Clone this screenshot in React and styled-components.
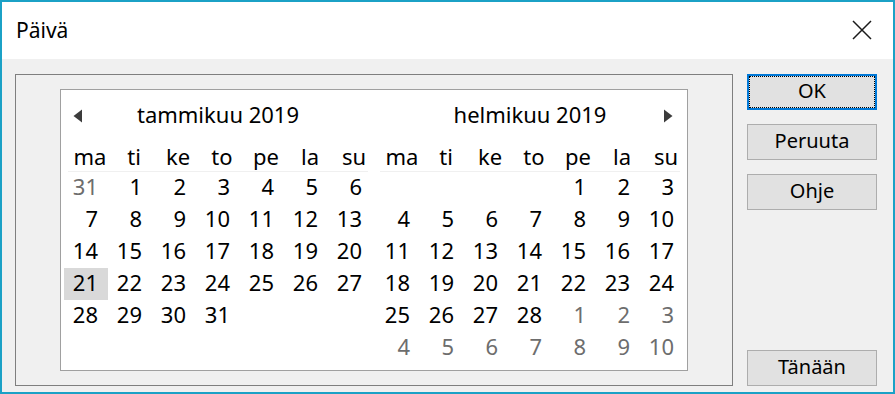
import React from "react";
import styled, { createGlobalStyle } from "styled-components";

const GlobalStyle = createGlobalStyle`
  html, body {
    margin: 0;
    padding: 0;
    background: #ffffff;
  }
  body {
    font-family: "Noto Sans", "Open Sans", sans-serif;
    color: #000000;
  }
`;

const JAN = {
  title: "tammikuu 2019",
  days: [
    [31, true], [1], [2], [3], [4], [5], [6],
    [7], [8], [9], [10], [11], [12], [13],
    [14], [15], [16], [17], [18], [19], [20],
    [21, false, true], [22], [23], [24], [25], [26], [27],
    [28], [29], [30], [31],
  ],
};

const FEB = {
  title: "helmikuu 2019",
  days: [
    [null], [null], [null], [null], [1], [2], [3],
    [4], [5], [6], [7], [8], [9], [10],
    [11], [12], [13], [14], [15], [16], [17],
    [18], [19], [20], [21], [22], [23], [24],
    [25], [26], [27], [28], [1, true], [2, true], [3, true],
    [4, true], [5, true], [6, true], [7, true], [8, true], [9, true], [10, true],
  ],
};

const WEEKDAYS = ["ma", "ti", "ke", "to", "pe", "la", "su"];

const Arrow = ({ dir }) => (
  <svg width="9" height="14" viewBox="0 0 9 14">
    {dir === "left" ? (
      <path d="M9 0.5 L9 13.5 L0.5 7 Z" fill="#3c3c3c" />
    ) : (
      <path d="M0 0.5 L0 13.5 L8.5 7 Z" fill="#3c3c3c" />
    )}
  </svg>
);

const CloseIcon = () => (
  <svg width="20" height="20" viewBox="0 0 20 20">
    <path d="M1 1 L19 19 M19 1 L1 19" stroke="#1a1a1a" strokeWidth="1.5" fill="none" />
  </svg>
);

const Month = ({ data, prev, next }) => (
  <MonthWrap>
    <MonthHeader>
      <ArrowSlot $side="left">{prev && <Arrow dir="left" />}</ArrowSlot>
      <MonthTitle>{data.title}</MonthTitle>
      <ArrowSlot $side="right">{next && <Arrow dir="right" />}</ArrowSlot>
    </MonthHeader>
    <WeekRow>
      {WEEKDAYS.map((d) => (
        <WeekDay key={d}>{d}</WeekDay>
      ))}
    </WeekRow>
    <DaysGrid>
      {data.days.map(([n, muted, today], i) => (
        <DayCell key={i} $muted={muted} $today={today}>
          {n}
        </DayCell>
      ))}
    </DaysGrid>
  </MonthWrap>
);

export default function App() {
  return (
    <>
      <GlobalStyle />
      <Window>
        <TitleBar>
          <Title>Päivä</Title>
          <CloseButton>
            <CloseIcon />
          </CloseButton>
        </TitleBar>
        <Body>
          <GroupBox>
            <CalendarBox>
              <Month data={JAN} prev />
              <Month data={FEB} next />
            </CalendarBox>
          </GroupBox>
          <ButtonColumn>
            <Button $default>OK</Button>
            <Button>Peruuta</Button>
            <Button>Ohje</Button>
            <Button $bottom>Tänään</Button>
          </ButtonColumn>
        </Body>
      </Window>
    </>
  );
}

const Window = styled.div`
  width: 895px;
  height: 394px;
  box-sizing: border-box;
  border: 2px solid #1ba1c6;
  display: flex;
  flex-direction: column;
  overflow: hidden;
`;

const TitleBar = styled.div`
  height: 55px;
  flex-shrink: 0;
  background: #ffffff;
  display: flex;
  align-items: center;
  justify-content: space-between;
  padding: 0 21px 2px 14px;
`;

const Title = styled.div`
  font-size: 21px;
  color: #000000;
`;

const CloseButton = styled.div`
  width: 20px;
  height: 20px;
  display: flex;
`;

const Body = styled.div`
  flex: 1;
  background: #f0f0f0;
  display: flex;
  gap: 14px;
  padding: 15px 14px 6px 13px;
`;

const GroupBox = styled.div`
  width: 718px;
  box-sizing: border-box;
  border: 1px solid #7f7f7f;
  padding: 14px 44px 0 44px;
`;

const CalendarBox = styled.div`
  width: 628px;
  height: 282px;
  box-sizing: border-box;
  border: 1px solid #a0a0a0;
  background: #ffffff;
  display: flex;
  gap: 4px;
  padding: 0 3px;
`;

const MonthWrap = styled.div`
  width: 308px;
  display: flex;
  flex-direction: column;
`;

const MonthHeader = styled.div`
  height: 53px;
  box-sizing: border-box;
  padding-bottom: 5px;
  display: grid;
  grid-template-columns: 30px 1fr 30px;
  align-items: center;
`;

const ArrowSlot = styled.div`
  display: flex;
  justify-content: ${(p) => (p.$side === "left" ? "flex-start" : "flex-end")};
  padding: ${(p) => (p.$side === "left" ? "3px 0 0 9px" : "3px 11px 0 0")};
`;

const MonthTitle = styled.div`
  text-align: center;
  font-size: 22px;
`;

const WeekRow = styled.div`
  height: 28px;
  display: grid;
  grid-template-columns: repeat(7, 44px);
  border-bottom: 1px solid #f0f0f0;
  margin: 0 4px;
`;

const WeekDay = styled.div`
  text-align: center;
  font-size: 22px;
  line-height: 26px;
  margin: 0 -4px;
`;

const DaysGrid = styled.div`
  display: grid;
  grid-template-columns: repeat(7, 44px);
  grid-auto-rows: 32px;
`;

const DayCell = styled.div`
  text-align: right;
  padding-right: 10px;
  font-size: 22px;
  line-height: 29px;
  color: ${(p) => (p.$muted ? "#6d6d6d" : "#000000")};
  background: ${(p) => (p.$today ? "#d9d9d9" : "transparent")};
`;

const ButtonColumn = styled.div`
  width: 130px;
  display: flex;
  flex-direction: column;
  gap: 14px;
`;

const Button = styled.div`
  height: 36px;
  box-sizing: border-box;
  display: flex;
  align-items: center;
  justify-content: center;
  padding-bottom: 3px;
  background: #e1e1e1;
  font-size: 20px;
  border: ${(p) => (p.$default ? "2px solid #0078d7" : "1px solid #adadad")};
  outline: ${(p) => (p.$default ? "1px dotted #000000" : "none")};
  outline-offset: -3px;
  margin-top: ${(p) => (p.$bottom ? "auto" : "0")};
`;
